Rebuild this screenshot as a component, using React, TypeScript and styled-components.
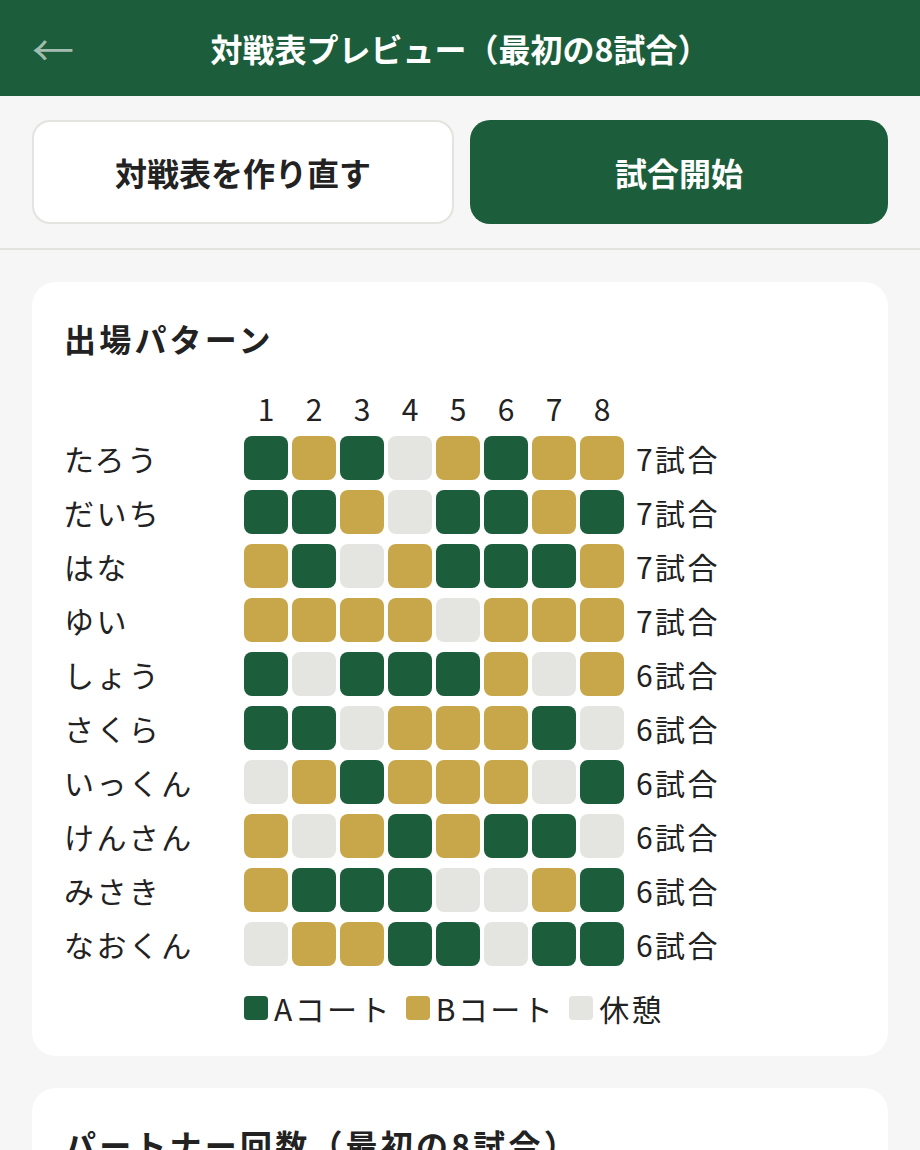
import React from "react";
import styled, { createGlobalStyle } from "styled-components";

const GREEN = "#1c5e3c";
const GOLD = "#c8a74b";
const REST = "#e4e4e0";

const GlobalStyle = createGlobalStyle`
  html, body { margin: 0; padding: 0; background: #f5f6f5; }
  body { font-family: "Noto Sans CJK JP", "Noto Sans", sans-serif; color: #222; }
  * { box-sizing: border-box; }
`;

const Page = styled.div`
  width: 920px;
  min-height: 1150px;
  background: #f5f6f5;
`;

const Header = styled.header`
  height: 96px;
  background: ${GREEN};
  display: grid;
  grid-template-columns: 1fr auto 1fr;
  align-items: center;
  padding: 0 32px;
`;

const BackButton = styled.button`
  justify-self: start;
  background: none;
  border: none;
  padding: 0;
  color: rgba(255, 255, 255, 0.6);
  font-family: "Noto Sans CJK JP", sans-serif;
  font-size: 42px;
  line-height: 1;
  cursor: pointer;
`;

const Title = styled.h1`
  margin: 0;
  color: #fff;
  font-size: 32px;
  font-weight: 700;
  white-space: nowrap;
`;

const Actions = styled.div`
  display: grid;
  grid-template-columns: 422px 1fr;
  gap: 16px;
  padding: 24px 32px;
  border-bottom: 2px solid #e2e2de;
`;

const ActionButton = styled.button<{ $primary?: boolean }>`
  height: 104px;
  border-radius: ${(p) => (p.$primary ? "20px" : "18px")};
  border: ${(p) => (p.$primary ? "none" : "2px solid #e3e3df")};
  background: ${(p) => (p.$primary ? GREEN : "#fff")};
  color: ${(p) => (p.$primary ? "#fff" : "#222")};
  font-family: "Noto Sans CJK JP", sans-serif;
  font-size: 32px;
  font-weight: 700;
  cursor: pointer;
`;

const Content = styled.main`
  display: flex;
  flex-direction: column;
  gap: 32px;
  padding: 32px;
`;

const Card = styled.section`
  background: #fff;
  border-radius: 24px;
  padding: 32px 32px 26px;
`;

const CardTitle = styled.h2`
  margin: 0 0 28px;
  font-size: 32px;
  line-height: 48px;
  font-weight: 700;
  letter-spacing: 0.1em;
  color: #222;
  white-space: nowrap;
`;

const PatternGrid = styled.div`
  display: grid;
  grid-template-columns: 176px repeat(8, 44px) auto;
  column-gap: 4px;
  row-gap: 10px;
  align-items: center;
`;

const ColNumber = styled.div`
  height: 36px;
  display: flex;
  align-items: center;
  justify-content: center;
  font-size: 30px;
  line-height: 1;
`;

const Name = styled.div`
  font-size: 30px;
  line-height: 44px;
  letter-spacing: 0.08em;
  white-space: nowrap;
`;

const Cell = styled.div<{ $kind: string }>`
  width: 44px;
  height: 44px;
  border-radius: 8px;
  background: ${(p) => (p.$kind === "A" ? GREEN : p.$kind === "B" ? GOLD : REST)};
`;

const Count = styled.div`
  margin-left: 8px;
  font-size: 30px;
  line-height: 44px;
  letter-spacing: 0.08em;
  white-space: nowrap;
`;

const Legend = styled.div`
  display: flex;
  align-items: center;
  gap: 14px;
  margin: 20px 0 0 180px;
`;

const LegendItem = styled.div`
  display: flex;
  align-items: center;
  gap: 6px;
  font-size: 30px;
  line-height: 44px;
  letter-spacing: 0.08em;
`;

const Swatch = styled.span<{ $kind: string }>`
  width: 24px;
  height: 24px;
  border-radius: 4px;
  background: ${(p) => (p.$kind === "A" ? GREEN : p.$kind === "B" ? GOLD : REST)};
`;

const players: [string, string][] = [
  ["たろう", "ABARBABB"],
  ["だいち", "AABRAABA"],
  ["はな", "BARBAAAB"],
  ["ゆい", "BBBBRBBB"],
  ["しょう", "ARAAABRB"],
  ["さくら", "AARBBBAR"],
  ["いっくん", "RBABBBRA"],
  ["けんさん", "BRBABAAR"],
  ["みさき", "BAAARRBA"],
  ["なおくん", "RBBAARAA"],
];

export default function App() {
  return (
    <Page>
      <GlobalStyle />
      <Header>
        <BackButton aria-label="戻る">←</BackButton>
        <Title>対戦表プレビュー（最初の8試合）</Title>
        <span />
      </Header>
      <Actions>
        <ActionButton>対戦表を作り直す</ActionButton>
        <ActionButton $primary>試合開始</ActionButton>
      </Actions>
      <Content>
        <Card>
          <CardTitle>出場パターン</CardTitle>
          <PatternGrid>
            <span />
            {[1, 2, 3, 4, 5, 6, 7, 8].map((n) => (
              <ColNumber key={n}>{n}</ColNumber>
            ))}
            <span />
            {players.map(([name, pattern]) => (
              <React.Fragment key={name}>
                <Name>{name}</Name>
                {pattern.split("").map((k, i) => (
                  <Cell key={i} $kind={k} />
                ))}
                <Count>{pattern.split("").filter((k) => k !== "R").length}試合</Count>
              </React.Fragment>
            ))}
          </PatternGrid>
          <Legend>
            <LegendItem>
              <Swatch $kind="A" />
              Aコート
            </LegendItem>
            <LegendItem>
              <Swatch $kind="B" />
              Bコート
            </LegendItem>
            <LegendItem>
              <Swatch $kind="R" />
              休憩
            </LegendItem>
          </Legend>
        </Card>
        <Card>
          <CardTitle>パートナー回数（最初の8試合）</CardTitle>
        </Card>
      </Content>
    </Page>
  );
}
